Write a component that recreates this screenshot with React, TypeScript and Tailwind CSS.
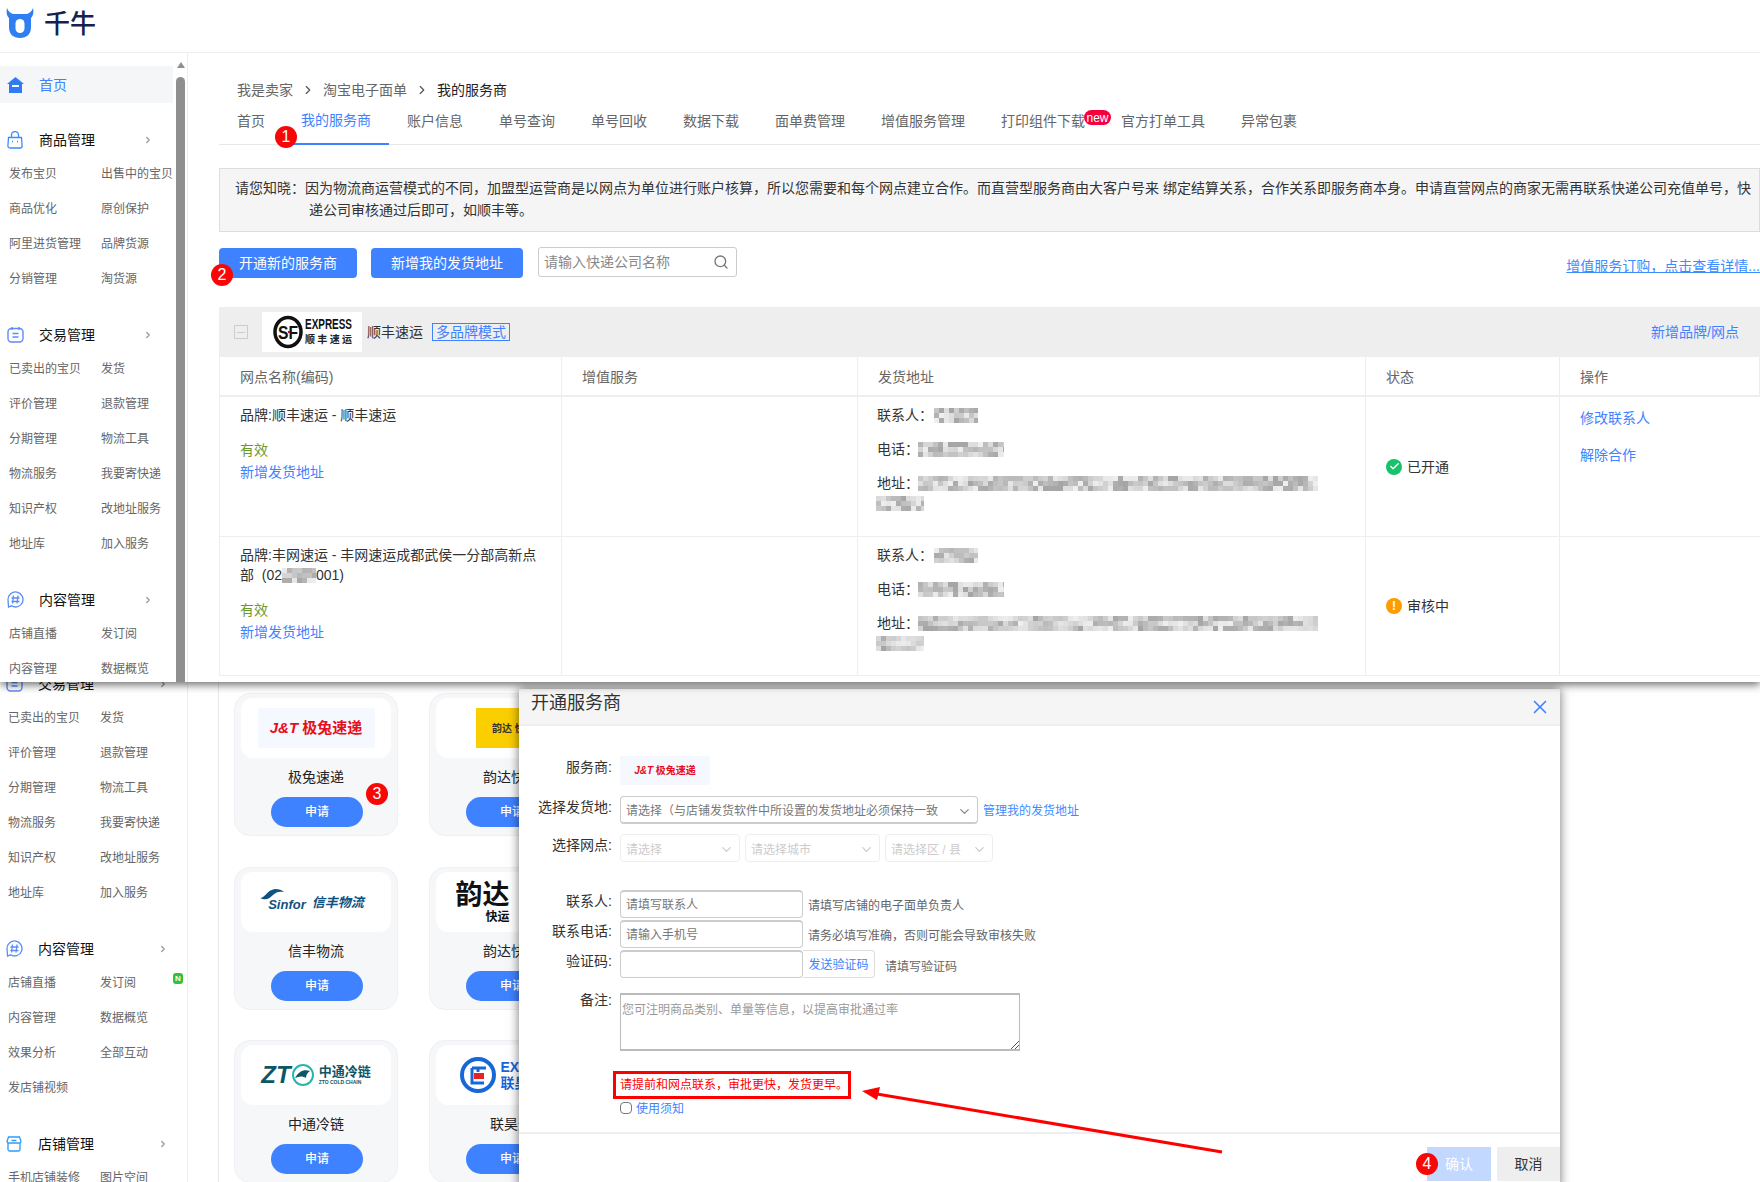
import { Check, ChevronDown, ChevronRight, Search, X } from "lucide-react";
import type { ReactNode } from "react";

const font = { fontFamily: '"Liberation Sans", "Noto Sans CJK SC", sans-serif' };

type Section = { title: string; icon: ReactNode; items: string[] };

const BagIcon = (
  <svg width="16" height="18" viewBox="0 0 16 18" fill="none" stroke="#3d8bff" strokeWidth="1.3">
    <path d="M1.5 6.5h13l.6 8.5a2 2 0 0 1-2 2H2.900a2 2 0 0 1-2-2z" />
    <path d="M4.500 6.500V4a3.500 3.500 0 0 1 7 0v2.500" />
    <path d="M5 10.500h1M10 10.500h1" />
  </svg>
);
const TradeIcon = (
  <svg width="17" height="17" viewBox="0 0 17 17" fill="none" stroke="#5c8df6" strokeWidth="1.4">
    <rect x="1" y="2.500" width="15" height="13.500" rx="3.500" />
    <path d="M5 1v3M12 1v3M5.500 7.500h6M5.500 11h6" />
  </svg>
);
const HashIcon = (
  <svg width="17" height="17" viewBox="0 0 17 17" fill="none" stroke="#5c8df6" strokeWidth="1.3">
    <path d="M1 8.500a7.500 7.500 0 1 1 3.500 6.300L1.500 16z" />
    <path d="M6.500 4.500l-1 8M11 4.500l-1 8M4.500 7h8M4.500 10.500h8" />
  </svg>
);
const StoreIcon = (
  <svg width="16" height="16" viewBox="0 0 16 16" fill="none" stroke="#2f9bf5" strokeWidth="1.3">
    <path d="M2.500 1h11l1.500 4.500a2 2 0 0 1-2.300 1.500H3.300A2 2 0 0 1 1 5.500z" />
    <path d="M2 7v6.500A1.500 1.500 0 0 0 3.500 15h9a1.500 1.500 0 0 0 1.500-1.500V7M5.500 4.500h5" />
  </svg>
);

const goods: Section = {
  title: "商品管理",
  icon: BagIcon,
  items: ["发布宝贝", "出售中的宝贝", "商品优化", "原创保护", "阿里进货管理", "品牌货源", "分销管理", "淘货源"],
};
const trade: Section = {
  title: "交易管理",
  icon: TradeIcon,
  items: ["已卖出的宝贝", "发货", "评价管理", "退款管理", "分期管理", "物流工具", "物流服务", "我要寄快递", "知识产权", "改地址服务", "地址库", "加入服务"],
};
const content: Section = { title: "内容管理", icon: HashIcon, items: ["店铺直播", "发订阅", "内容管理", "数据概览"] };
const contentFull: Section = { ...content, items: [...content.items, "效果分析", "全部互动", "发店铺视频"] };
const shop: Section = { title: "店铺管理", icon: StoreIcon, items: ["手机店铺装修", "图片空间"] };

const tabs = ["首页", "我的服务商", "账户信息", "单号查询", "单号回收", "数据下载", "面单费管理", "增值服务管理", "打印组件下载", "官方打单工具", "异常包裹"];

function NavSection({ section, chevron }: { section: Section; chevron: string }) {
  return (
    <div className="mb-[22px]">
      <div className="flex h-[33px] items-center">
        <span className="flex w-[39px] shrink-0 justify-start pl-[7px]">{section.icon}</span>
        <span className="flex-1 text-sm text-[#111]">{section.title}</span>
        <ChevronRight size={10} strokeWidth={3} className={`text-[#999] ${chevron}`} />
      </div>
      <div className="grid grid-cols-[92px_84px] pl-[9px]">
        {section.items.map((item) => (
          <div key={item} className="flex h-[35px] items-center whitespace-nowrap text-xs text-[#666]">
            {item}
          </div>
        ))}
      </div>
    </div>
  );
}

function Badge({ n, className }: { n: number; className: string }) {
  return (
    <span className={`absolute z-40 flex h-[22px] w-[22px] items-center justify-center rounded-full bg-[#f80707] text-base text-white ${className}`}>
      {n}
    </span>
  );
}

// 打码区域
function Mosaic({ w, h, seed, className = "" }: { w: number; h: number; seed: number; className?: string }) {
  const cells = [];
  let v = seed * 97 + 13;
  for (let y = 0; y < h; y += 5) {
    for (let x = 0; x < w; x += 5) {
      v = (v * 73 + 41) % 1009;
      const g = 165 + (v % 75);
      cells.push(<rect key={`${x}-${y}`} x={x} y={y} width="5" height="5" fill={`rgb(${g},${g},${g})`} />);
    }
  }
  return (
    <svg width={w} height={h} className={`blur-[0.6px] ${className}`}>
      {cells}
    </svg>
  );
}

function SfLogo() {
  return (
    <svg width="100" height="40" viewBox="0 0 100 40">
      <ellipse cx="26" cy="20" rx="13" ry="14.500" fill="none" stroke="#111" strokeWidth="3.500" />
      <text x="26" y="27" textAnchor="middle" fontSize="19" fontWeight="700" fill="#111" textLength="20" lengthAdjust="spacingAndGlyphs" style={font}>SF</text>
      <circle cx="27" cy="20" r="1.200" fill="#e60012" />
      <text x="43" y="17" fontSize="14" fontWeight="700" fill="#111" textLength="47" lengthAdjust="spacingAndGlyphs" style={font}>EXPRESS</text>
      <text x="43" y="31" fontSize="10" fontWeight="700" fill="#222" textLength="47" style={font}>顺丰速运</text>
    </svg>
  );
}

function JtLogo({ small }: { small?: boolean }) {
  return (
    <div className={`flex items-center justify-center bg-[#f5f8ff] ${small ? "h-[29px] w-[90px]" : "h-[40px] w-[117px]"}`}>
      <span className={`whitespace-nowrap font-bold text-[#e60e20] ${small ? "text-[10px]" : "text-[15px]"}`} style={font}>
        <span className="italic">J&T</span> 极兔速递
      </span>
    </div>
  );
}

const cardLogos: Record<string, ReactNode> = {
  极兔速递: <JtLogo />,
  信丰物流: (
    <div className="relative flex h-[40px] w-[117px] items-center justify-center whitespace-nowrap font-bold italic text-[#10527f]">
      <svg width="24" height="12" viewBox="0 0 24 12" className="absolute left-[2px] top-[7px]" fill="#10527f">
        <path d="M0 9C5 9 7 1 15 0c4 0 7 1 9 3-5-1-8 0-11 3s-7 6-13 3z" />
      </svg>
      <span className="mt-[6px] text-[13px]">Sinfor</span>
      <span className="ml-[6px] mt-[2px] text-[13px]">信丰物流</span>
    </div>
  ),
  中通冷链: (
    <div className="flex h-[40px] w-[117px] items-center justify-center whitespace-nowrap text-[#0e5566]">
      <span className="text-2xl font-bold italic leading-none">ZT</span>
      <svg width="24" height="24" viewBox="0 0 24 24" fill="none">
        <circle cx="12" cy="12" r="10" stroke="#27b6ad" strokeWidth="2" />
        <path d="M4 15c4-7 9-9 15-7-3 2-4 4-4 7-3-2-7-2-11 0z" fill="#0e5566" />
      </svg>
      <span className="ml-[4px] flex flex-col items-start leading-none">
        <span className="text-[13px] font-bold">中通冷链</span>
        <span className="mt-[2px] text-[5px] font-bold">ZTO COLD CHAIN</span>
      </span>
    </div>
  ),
  韵达快递: (
    <div className="ml-[40px] flex h-[40px] w-[117px] items-center bg-[#fbce00] pl-[16px] text-[10px] font-bold text-[#333]">
      韵达 快递
    </div>
  ),
  韵达快运: (
    <div className="flex h-[40px] w-[117px] flex-col items-end pr-[60px] font-bold leading-none text-[#111]">
      <span className="text-[27px]">韵达</span>
      <span className="text-xs">快运</span>
    </div>
  ),
  联昊通: (
    <div className="flex h-[40px] w-[117px] items-center gap-[4px] pl-[6px]">
      <svg width="38" height="38" viewBox="0 0 38 38" fill="none">
        <circle cx="19" cy="19" r="16" stroke="#1667d8" strokeWidth="4" />
        <path d="M13 12h14M19 12v4M13 12v15h12" stroke="#1667d8" strokeWidth="3" />
        <rect x="15" y="17" width="10" height="6" fill="#e8202a" />
      </svg>
      <span className="flex flex-col text-sm font-bold leading-[16px] text-[#1667d8]">
        <span>EXPRESS</span>
        <span>联昊通</span>
      </span>
    </div>
  ),
};

const carriers = [
  { name: "极兔速递", logo: "极兔速递" },
  { name: "韵达快递", logo: "韵达快递" },
  { name: "信丰物流", logo: "信丰物流" },
  { name: "韵达快运", logo: "韵达快运" },
  { name: "中通冷链", logo: "中通冷链" },
  { name: "联昊通", logo: "联昊通" },
];

function CarrierCard({ name, logo }: { name: string; logo: string }) {
  return (
    <div className="flex h-[143px] flex-col items-center rounded-2xl border border-[#eef0f3] bg-[#f6f7f9] px-[6px] pt-[4px]">
      <div className="flex h-[60px] w-full items-center justify-center overflow-hidden rounded-xl bg-white">{cardLogos[logo]}</div>
      <div className="mt-[9px] text-sm leading-5 text-[#222]">{name}</div>
      <button className="ml-[2px] mt-[10px] h-[30px] w-[92px] rounded-full bg-[#3f82ff] text-xs font-medium text-white" type="button">
        申请
      </button>
    </div>
  );
}

function BranchCell({ brand, code }: { brand: string; code?: boolean }) {
  return (
    <div className="border-r border-[#eee] px-[20px] pt-[8px]">
      <div className="text-sm leading-[20px] text-[#333]">
        {brand}
        {code && (
          <>
            <br />
            <span className="inline-flex items-center">
              部&nbsp;&nbsp;(02
              <Mosaic w={34} h={15} seed={9} />
              001)
            </span>
          </>
        )}
      </div>
      <div className="mt-[15px] text-sm leading-[20px] text-[#6a9a2e]">有效</div>
      <div className="mt-[2px] text-sm leading-[20px] text-[#3f82ff]">新增发货地址</div>
    </div>
  );
}

function AddressCell({ seed }: { seed: number }) {
  return (
    <div className="border-r border-[#eee] pl-[19px] pt-[8px] text-sm leading-[20px] text-[#333]">
      <div className="flex h-[20px] items-center">
        联系人：
        <Mosaic w={44} h={15} seed={seed} className="ml-[1px]" />
      </div>
      <div className="mt-[14px] flex h-[20px] items-center">
        电话：
        <Mosaic w={86} h={15} seed={seed + 1} className="-ml-[1px]" />
      </div>
      <div className="mt-[14px] flex h-[20px] items-center">
        地址：
        <Mosaic w={400} h={15} seed={seed + 2} className="-ml-[1px]" />
      </div>
      <Mosaic w={48} h={15} seed={seed + 3} className="-ml-[1px] mt-[3px]" />
    </div>
  );
}

function StatusCell({ ok, label }: { ok: boolean; label: string }) {
  return (
    <div className="flex items-center gap-[5px] border-r border-[#eee] pl-[20px] text-sm text-[#333]">
      <span className={`flex h-[16px] w-[16px] items-center justify-center rounded-full text-white ${ok ? "bg-[#16c36a]" : "bg-[#ff9c00]"}`}>
        {ok ? <Check size={11} strokeWidth={3} /> : <span className="text-xs font-bold leading-none">!</span>}
      </span>
      {label}
    </div>
  );
}

function FieldRow({ label, children, className = "", labelClass = "pt-[1px]" }: { label: string; children: ReactNode; className?: string; labelClass?: string }) {
  return (
    <div className={`flex ${className}`}>
      <div className={`w-[93px] shrink-0 text-right text-sm leading-[20px] text-[#333] ${labelClass}`}>{label}:</div>
      <div className="ml-[8px] flex items-start">{children}</div>
    </div>
  );
}

function SelectBox({ text, w, disabled }: { text: string; w: string; disabled?: boolean }) {
  return (
    <div className={`mr-[5px] flex h-[28px] items-center justify-between rounded-sm border px-[5px] pt-[3px] text-xs ${w} ${disabled ? "border-[#eee] text-[#ccc]" : "border-[#ccc] border-b-2 text-[#777]"}`}>
      <span className="whitespace-nowrap">{text}</span>
      <ChevronDown size={15} className={disabled ? "text-[#ccc]" : "text-[#888]"} />
    </div>
  );
}

function TextBox({ placeholder }: { placeholder?: string }) {
  return (
    <div className="flex h-[28px] w-[183px] items-center rounded-sm border border-[#ccc] border-t-2 px-[5px] pt-[1px] text-xs text-[#777]">{placeholder}</div>
  );
}

export default function App() {
  return (
    <div className="relative h-[1182px] w-[1760px] overflow-hidden bg-white" style={font}>
      {/* 上半截截图 */}
      <div className="relative z-20 h-[682px] overflow-hidden bg-white shadow-[0_3px_8px_rgba(0,0,0,0.55)]">
        <header className="flex h-[53px] items-start border-b border-[#eee] pl-[6px] pt-[7px]">
          <svg width="28" height="32" viewBox="0 0 28 32" fill="none">
            <path d="M1 1c1 3 3 5 6 6h14c3-1 5-3 6-6 1 5 0 8-2 10v9c0 7-4 11-11 11S3 27 3 20v-9C1 9 0 6 1 1z" fill="#2f7ff2" />
            <rect x="9.500" y="12" width="9" height="14" rx="4.500" fill="#fff" />
          </svg>
          <span className="ml-[10px] text-[26px] font-medium leading-[34px] text-[#15224f]">千牛</span>
        </header>

        <div className="flex h-[629px]">
          <aside className="flex w-[188px] shrink-0 border-r border-[#eee]">
            <nav className="w-[176px] overflow-hidden">
              <div className="mr-[3px] mt-[13px] flex h-[37px] items-center bg-[#f5f6f8] pl-[7px]">
                <svg width="17" height="16" viewBox="0 0 17 16">
                  <path d="M8.500 0L17 7h-2v9H2V7H0z" fill="#2f7bf6" />
                  <rect x="5" y="8" width="7" height="2" fill="#fff" />
                </svg>
                <span className="ml-[15px] text-sm text-[#3f82ff]">首页</span>
              </div>
              <div className="mt-[20px]">
                <NavSection section={goods} chevron="mr-[23px]" />
                <NavSection section={trade} chevron="mr-[23px]" />
                <NavSection section={content} chevron="mr-[23px]" />
              </div>
            </nav>
            <div className="flex w-[9px] flex-col items-center pt-[9px]">
              <span className="h-0 w-0 border-x-[4px] border-b-[6px] border-x-transparent border-b-[#8f8f8f]" />
              <span className="mt-[9px] w-full flex-1 rounded-t-full bg-[#8f8f8f]" />
            </div>
          </aside>

          <main className="min-w-0 flex-1 pl-[31px]">
            <div className="flex h-[48px] items-end pl-[18px] text-sm leading-[22px] text-[#666]">
              <span>我是卖家</span>
              <ChevronRight size={14} className="mx-[8px] mb-[4px] text-[#555]" />
              <span>淘宝电子面单</span>
              <ChevronRight size={14} className="mx-[8px] mb-[4px] text-[#555]" />
              <span className="text-[#222]">我的服务商</span>
            </div>
            <div className="flex h-[44px] border-b border-[#e8e8e8]">
              {tabs.map((tab, i) => (
                <div
                  key={tab}
                  className={`relative flex h-[44px] items-center whitespace-nowrap px-[18px] pb-[4px] text-sm ${i === 1 ? "border-b-2 border-[#3f82ff] text-[#3f82ff]" : "text-[#666]"}`}
                >
                  {tab}
                  {tab === "打印组件下载" && (
                    <span className="absolute -right-[8px] top-[9px] flex h-[15px] w-[27px] items-center justify-center rounded-full bg-[#f5003c] text-xs font-medium leading-none text-white">
                      new
                    </span>
                  )}
                </div>
              ))}
            </div>

            <div className="relative mt-[23px] h-[64px] border border-[#ddd] bg-[#f5f5f5] pl-[89px] pr-[6px] pt-[8px] text-sm leading-[22px] text-[#333] -indent-[74px]">
              请您知晓：因为物流商运营模式的不同，加盟型运营商是以网点为单位进行账户核算，所以您需要和每个网点建立合作。而直营型服务商由大客户号来 绑定结算关系，合作关系即服务商本身。申请直营网点的商家无需再联系快递公司充值单号，快递公司审核通过后即可，如顺丰等。
            </div>

            <div className="mt-[15px] flex h-[31px] items-start">
              <button className="mt-[1px] h-[30px] w-[138px] rounded-sm bg-[#3f82ff] text-sm text-white" type="button">
                开通新的服务商
              </button>
              <button className="ml-[14px] mt-[1px] h-[30px] w-[152px] rounded-sm bg-[#3f82ff] text-sm text-white" type="button">
                新增我的发货地址
              </button>
              <div className="ml-[15px] flex h-[30px] w-[199px] items-center justify-between rounded-[3px] border border-[#ccc] pl-[5px] pr-[7px] text-sm text-[#888]">
                请输入快递公司名称
                <Search size={16} className="text-[#777]" />
              </div>
              <a className="ml-auto mt-[9px] whitespace-nowrap text-sm leading-[20px] text-[#3d8bff] underline">增值服务订购，点击查看详情...</a>
            </div>

            <div className="mt-[29px] flex h-[50px] items-center bg-[#eee] pl-[15px] pr-[21px]">
              <span className="flex h-[14px] w-[14px] items-center justify-center border border-[#ccc]">
                <span className="h-px w-[8px] bg-[#ccc]" />
              </span>
              <div className="ml-[14px] h-[40px] w-[100px] bg-white">
                <SfLogo />
              </div>
              <span className="ml-[5px] text-sm text-[#333]">顺丰速运</span>
              <span className="ml-[9px] flex h-[18px] w-[78px] items-center justify-center border border-[#3f82ff] text-sm text-[#3f82ff]">多品牌模式</span>
              <span className="ml-auto text-sm text-[#3f82ff]">新增品牌/网点</span>
            </div>

            <div className="grid grid-cols-[342px_296px_508px_194px_1fr] border-l border-[#eee] text-sm">
              {["网点名称(编码)", "增值服务", "发货地址", "状态", "操作"].map((h) => (
                <div key={h} className="flex h-[40px] items-center border-b-2 border-r border-[#eee] pl-[20px] pt-[1px] text-[#666]">
                  {h}
                </div>
              ))}
              <BranchCell brand="品牌:顺丰速运 - 顺丰速运" />
              <div className="h-[139px] border-r border-[#eee]" />
              <AddressCell seed={1} />
              <StatusCell ok label="已开通" />
              <div className="pl-[20px] pt-[10px] text-sm leading-[20px] text-[#3f82ff]">
                <div className="mt-[1px]">修改联系人</div>
                <div className="mt-[17px]">解除合作</div>
              </div>
              <div className="col-span-5 h-px bg-[#eee]" />
              <BranchCell brand="品牌:丰网速运 - 丰网速运成都武侯一分部高新点" code />
              <div className="h-[138px] border-r border-[#eee]" />
              <AddressCell seed={5} />
              <StatusCell ok={false} label="审核中" />
              <div />
              <div className="col-span-5 h-px bg-[#eee]" />
            </div>
          </main>
        </div>
      </div>

      {/* 下半截截图 */}
      <div className="flex h-[500px]">
        <aside className="w-[188px] shrink-0 overflow-hidden border-r border-[#eee]">
          <div className="relative -ml-[1px] -mt-[15px]">
            <NavSection section={trade} chevron="mr-[19px]" />
            <NavSection section={contentFull} chevron="mr-[19px]" />
            <NavSection section={shop} chevron="mr-[19px]" />
            <span className="absolute left-[174px] top-[306px] flex h-[11px] w-[10px] items-center justify-center rounded-[3px] bg-[#2fc23c] text-[8px] font-bold leading-none text-white">
              N
            </span>
          </div>
        </aside>
        <div className="w-[31px] shrink-0 border-r border-[#e8e8e8]" />
        <div className="grid grid-cols-[164px_164px] content-start gap-x-[31px] gap-y-[30.5px] pl-[15px] pt-[11px]">
          {carriers.map((c) => (
            <CarrierCard key={c.name} name={c.name} logo={c.logo} />
          ))}
        </div>
      </div>

      {/* 弹窗 */}
      <div className="absolute left-[519px] top-[689px] z-10 flex h-[500px] w-[1041px] flex-col bg-white shadow-[0_0_10px_rgba(0,0,0,0.55)]">
        <div className="flex h-[37px] shrink-0 items-start justify-between border-b-2 border-[#eee] bg-[#f5f5f5] pl-[12px] pr-[9px]">
          <span className="text-lg leading-[28px] text-[#333]">开通服务商</span>
          <X size={22} strokeWidth={1.8} className="mt-[7px] text-[#3f82ff]" />
        </div>
        <div className="pt-[30px]">
          <FieldRow label="服务商" className="h-[40px]">
            <JtLogo small />
          </FieldRow>
          <FieldRow label="选择发货地" className="h-[38px]">
            <SelectBox text="请选择（与店铺发货软件中所设置的发货地址必须保持一致" w="w-[358px]" />
            <span className="pt-[2px] text-xs leading-[26px] text-[#3d8bff]">管理我的发货地址</span>
          </FieldRow>
          <FieldRow label="选择网点" className="h-[56px]">
            <SelectBox text="请选择" w="w-[120px]" disabled />
            <SelectBox text="请选择城市" w="w-[135px]" disabled />
            <SelectBox text="请选择区 / 县" w="w-[108px]" disabled />
          </FieldRow>
          <FieldRow label="联系人" className="h-[30px]">
            <TextBox placeholder="请填写联系人" />
            <span className="ml-[5px] pt-[1px] text-xs leading-[30px] text-[#666]">请填写店铺的电子面单负责人</span>
          </FieldRow>
          <FieldRow label="联系电话" className="h-[30px]">
            <TextBox placeholder="请输入手机号" />
            <span className="ml-[5px] pt-[1px] text-xs leading-[30px] text-[#666]">请务必填写准确，否则可能会导致审核失败</span>
          </FieldRow>
          <FieldRow label="验证码" className="h-[43px]">
            <TextBox />
            <span className="flex h-[28px] w-[72px] items-center justify-center rounded-r-sm border border-l-0 border-[#ddd] pt-[2px] text-xs text-[#3f82ff]">发送验证码</span>
            <span className="ml-[10px] pt-[2px] text-xs leading-[30px] text-[#666]">请填写验证码</span>
          </FieldRow>
          <FieldRow label="备注" className="h-[78px]" labelClass="-mt-[3px]">
            <div className="relative h-[58px] w-[400px] border border-y-2 border-[#bbb] pl-[1px] pt-[7px] text-xs text-[#999]">
              您可注明商品类别、单量等信息，以提高审批通过率
              <svg width="9" height="9" viewBox="0 0 9 9" className="absolute bottom-0 right-0" stroke="#555">
                <path d="M1 9l8-8M5 9l4-4" />
              </svg>
            </div>
          </FieldRow>
          <div className="ml-[94px] flex h-[28px] w-[238px] items-center whitespace-nowrap border-[3px] border-[#f00] pl-[4px] text-xs text-[#f00]">
            请提前和网点联系，审批更快，发货更早。
          </div>
          <div className="ml-[101px] mt-[1px] flex h-[18px] items-center">
            <span className="-mt-[3px] h-[12px] w-[12px] rounded-sm border border-[#777] bg-white" />
            <span className="ml-[4px] text-xs text-[#3f82ff]">使用须知</span>
          </div>
        </div>
        <div className="mt-[14px] border-t-2 border-[#eee] pt-[13px]">
          <div className="flex justify-end gap-[6px]">
            <button className="h-[34px] w-[64px] bg-[#c2d8ff] text-sm text-white" type="button">确认</button>
            <button className="h-[34px] w-[63px] bg-[#eee] text-sm text-[#333]" type="button">取消</button>
          </div>
        </div>
      </div>

      {/* 标注 */}
      <Badge n={1} className="left-[275px] top-[126px]" />
      <Badge n={2} className="left-[211px] top-[264px]" />
      <Badge n={3} className="left-[366px] top-[783px]" />
      <Badge n={4} className="left-[1416px] top-[1153px]" />
      <svg width="380" height="80" viewBox="0 0 380 80" className="absolute left-[855px] top-[1080px] z-30">
        <path d="M367 72L22 14" stroke="#f00" strokeWidth="3" />
        <path d="M7 11l18-4-3 13z" fill="#f00" />
      </svg>
    </div>
  );
}
